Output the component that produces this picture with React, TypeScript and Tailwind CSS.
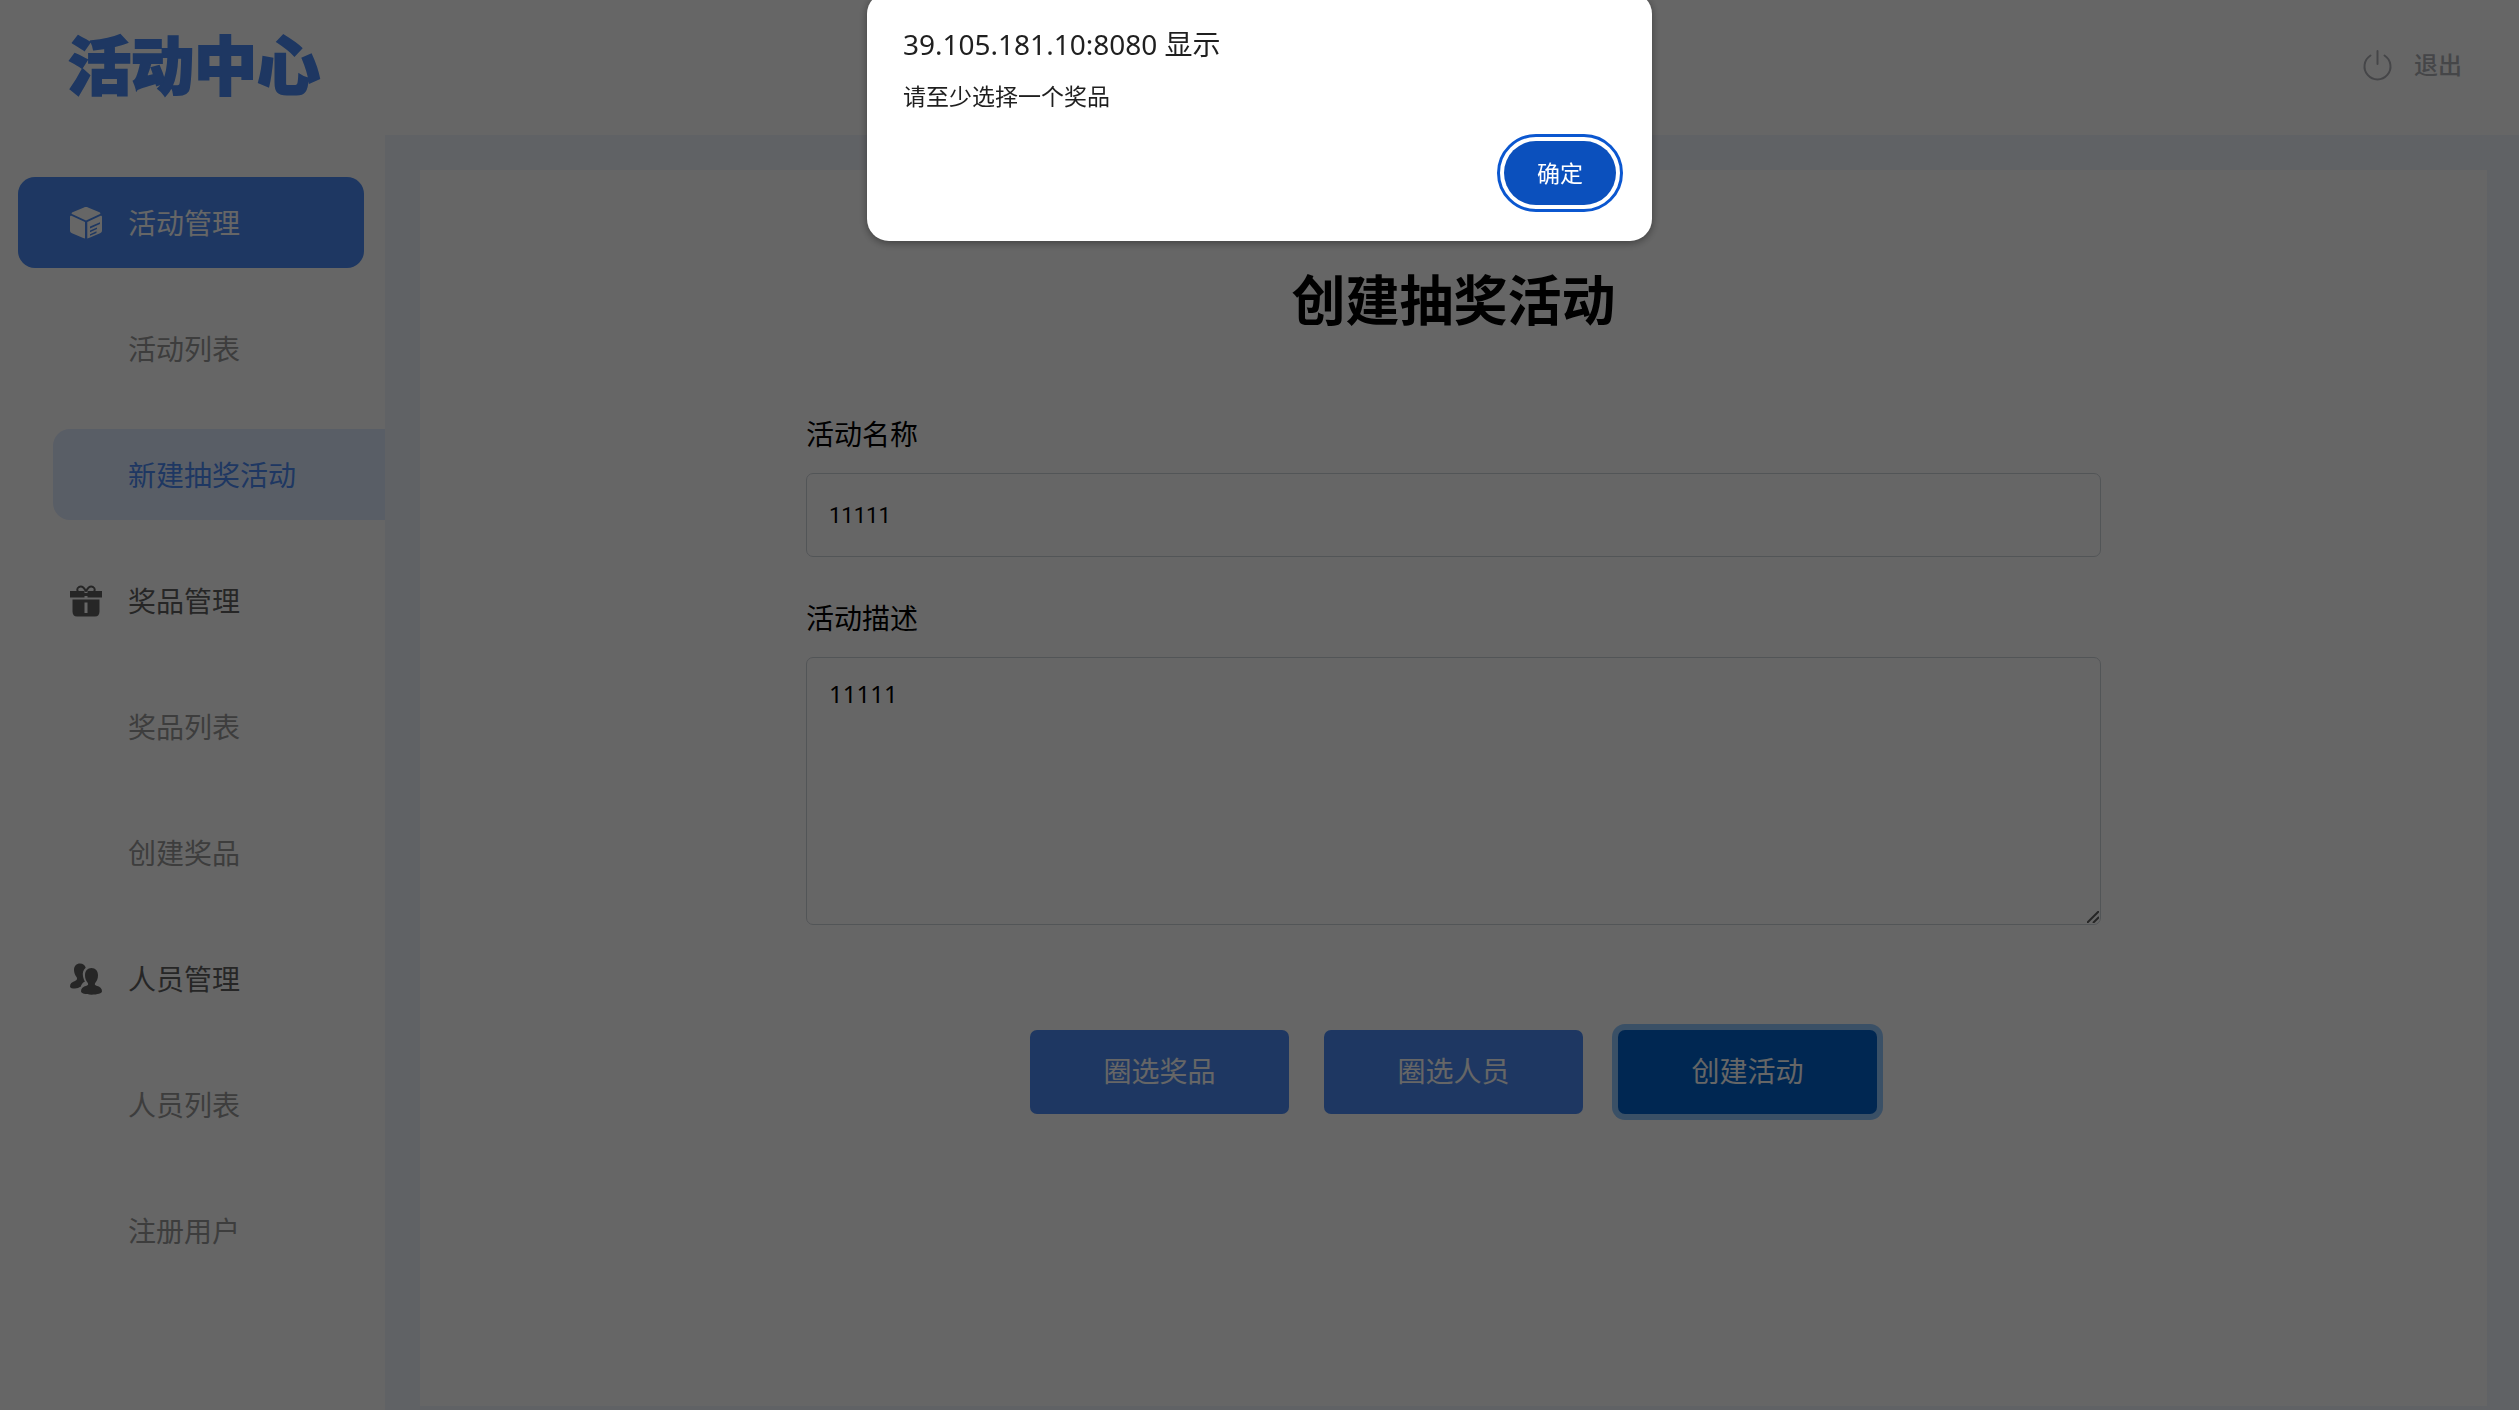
import type { ReactNode } from "react";

type NavEntry = { label: string; icon?: ReactNode; active?: boolean; selected?: boolean };

function BoxIcon() {
  return (
    <svg className="h-8 w-8" viewBox="0 0 32 32" fill="currentColor" aria-hidden="true">
      <path d="M16 0c.7 0 1.400.2 2 .4l11.500 4.800c1.200.5 1.200 1.600 0 2.100L16 13.600 2.500 7.300c-1.200-.5-1.200-1.600 0-2.100L14 .4c.6-.2 1.300-.4 2-.4Z" />
      <path d="M1.400 8.800 15 14.900V31.500c-.6-.1-1.200-.2-1.800-.4L2 26.200C.8 25.700 0 24.800 0 23.500V10c0-1 .6-1.500 1.400-1.200Z" />
      <path
        fillRule="evenodd"
        d="M30.600 8.800c.8-.3 1.400.2 1.400 1.200v13.500c0 1.300-.8 2.200-2 2.700l-11.200 4.900c-.5.200-1 .3-1.500.4V14.900L30.600 8.800ZM20 19.600v1.900l10-4.400v-1.900L20 19.600Zm0 3.900v1.700l7-3.100v-1.700L20 23.500Zm0 3.700v1.600l6.500-2.900v-1.600L20 27.200Z"
      />
    </svg>
  );
}

function GiftIcon() {
  return (
    <svg className="h-8 w-8" viewBox="0 0 32 32" aria-hidden="true">
      <g fill="none" stroke="currentColor" strokeWidth="2">
        <path d="M16 6.500C14 2.500 11.500.8 9 2c-2.500 1.500-2 4-.5 5" />
        <path d="M16 6.500C18 2.500 20.500.8 23 2c2.500 1.500 2 4 .5 5" />
      </g>
      <path fill="currentColor" d="M0 6h14.500v6.500H0zM17.500 6H32v6.500H17.500zM14.500 8h3v3h-3z" />
      <path
        fill="currentColor"
        fillRule="evenodd"
        d="M2.500 14.500h27v12c0 3-1.500 5-4.500 5H7c-3 0-4.500-2-4.500-5v-12ZM14.500 17.500V28h3V17.500h-3Z"
      />
    </svg>
  );
}

function UsersIcon() {
  return (
    <svg className="h-8 w-8" viewBox="0 0 32 32" fill="currentColor" aria-hidden="true">
      <path d="M10 .5c3 0 5.200 1.700 5.700 4.200-2.400 2-3.400 5-2.700 8.600.4 2.200 1.100 3.900 2 5.200-2 1-3.600 2.400-4.300 5.300-1.700.8-3.500 1.700-5.700 1.700-2.500 0-5-.5-5-1.800 0-3.400 1.800-4.700 5-5.800 1.900-.7 2.500-2 1.700-3.700C5.200 12.300 4 9.800 4 7c0-3.900 2.400-6.500 6-6.500Z" />
      <path d="M21.500 5c4 0 6.500 3 6.500 7.300 0 3-1 5.600-2.800 7.700-.8 1.400-.2 2.200 1.300 2.700 3.500 1 5.500 2.600 5.500 5.600 0 2-4.500 3.400-10.500 3.400S11 30.300 11 28.300c0-3 2-4.600 5.500-5.600 1.500-.5 2.100-1.300 1.300-2.700-1.800-2.100-2.800-4.700-2.800-7.700C15 8 17.500 5 21.500 5Z" />
    </svg>
  );
}

function PowerIcon() {
  return (
    <svg className="h-8 w-8" viewBox="0 0 32 32" fill="none" stroke="currentColor" strokeWidth="2" strokeLinecap="round" aria-hidden="true">
      <path d="M15.500 2v13" />
      <path d="M8.500 6.500a13 13 0 1 0 14 0" />
    </svg>
  );
}

const navEntries: NavEntry[] = [
  { label: "活动管理", icon: <BoxIcon />, active: true },
  { label: "活动列表" },
  { label: "新建抽奖活动", selected: true },
  { label: "奖品管理", icon: <GiftIcon /> },
  { label: "奖品列表" },
  { label: "创建奖品" },
  { label: "人员管理", icon: <UsersIcon /> },
  { label: "人员列表" },
  { label: "注册用户" },
];

function NavItem({ entry }: { entry: NavEntry }) {
  let look = "ml-[53px] pl-[17px] text-[#999999]";
  if (entry.active) look = "ml-[18px] mr-[21px] rounded-[17px] bg-[#4b8bf4] pl-[52px] text-white";
  else if (entry.selected) look = "ml-[53px] rounded-l-[17px] bg-[#dfeaff] pl-[17px] text-[#4b8bf4]";
  else if (entry.icon) look = "ml-[53px] pl-[17px] text-[#606060]";

  return (
    <li>
      <a href="#" className={`flex h-[91px] items-center gap-[26px] text-[28px] ${look}`}>
        <span className="h-8 w-8 shrink-0">{entry.icon}</span>
        {entry.label}
      </a>
    </li>
  );
}

function AlertDialog() {
  return (
    <div className="fixed inset-0 flex items-start justify-center bg-black/60">
      <div
        role="alertdialog"
        aria-labelledby="alert-title"
        aria-describedby="alert-text"
        className="-mt-2 flex w-[785px] flex-col rounded-[22px] bg-white px-9 pb-9 pt-8 text-[#1f1f1f] shadow-[0_2px_8px_rgba(0,0,0,0.4)]"
      >
        <h2 id="alert-title" className="text-[28px] leading-10">
          39.105.181.10:8080 显示
        </h2>
        <p id="alert-text" className="mt-3 text-[23px] leading-10">
          请至少选择一个奖品
        </p>
        <button
          type="button"
          className="mt-[25px] h-16 w-28 self-end rounded-full bg-[#0b50bd] text-[23px] text-white outline-[3px] outline-offset-4 outline-[#0b57d0]"
        >
          确定
        </button>
      </div>
    </div>
  );
}

export default function App() {
  return (
    <div className="flex min-h-screen flex-col bg-white font-['Noto_Sans','Noto_Sans_CJK_SC',sans-serif]">
      <header className="flex h-[135px] items-center justify-between pb-1.5 pl-[68px] pr-[57px]">
        <h1 className="text-[63px] font-black leading-none text-[#4b8bf4] [-webkit-text-stroke:2px_#4b8bf4]">活动中心</h1>
        <button type="button" className="flex items-center gap-5 text-2xl font-medium text-[#adaeb5]">
          <PowerIcon />
          退出
        </button>
      </header>

      <div className="flex grow">
        <nav className="w-[385px] shrink-0 pt-[42px]">
          <ul className="flex flex-col gap-[35px]">
            {navEntries.map((entry) => (
              <NavItem entry={entry} key={entry.label} />
            ))}
          </ul>
        </nav>

        <main className="flex grow flex-col bg-[#f1f4fd] pb-1 pl-[35px] pr-8 pt-[35px]">
          <section className="grow bg-white pt-[90px]">
            <h2 className="text-center text-[54px] font-bold leading-[80px] text-black">创建抽奖活动</h2>
            <form className="mx-auto mt-[74px] flex max-w-[1295px] flex-col text-black">
              <label htmlFor="activity-name" className="text-[28px] leading-10">
                活动名称
              </label>
              <input
                id="activity-name"
                defaultValue="11111"
                className="mt-[19px] h-[84px] rounded-[7px] border border-[#ced4da] px-[22px] font-[Roboto,sans-serif] text-[22px]"
              />
              <label htmlFor="activity-text" className="mt-[41px] text-[28px] leading-10">
                活动描述
              </label>
              <div className="relative mt-[19px]">
                <textarea
                  id="activity-text"
                  defaultValue="11111"
                  className="block h-[268px] w-full resize-none rounded-[7px] border border-[#ced4da] px-[22px] py-[18px] text-2xl leading-9"
                />
                <svg
                  className="pointer-events-none absolute bottom-0.5 right-0.5 h-3 w-3 text-[#606060]"
                  viewBox="0 0 12 12"
                  fill="none"
                  stroke="currentColor"
                  strokeWidth="2"
                  aria-hidden="true"
                >
                  <path d="M0 12 12 0M6 12l6-6" />
                </svg>
              </div>
              <div className="mt-[105px] flex justify-center gap-[35px] text-[28px] text-white">
                <button type="button" className="h-[84px] w-[259px] rounded-[7px] bg-[#4b8bf4] pb-0.5">
                  圈选奖品
                </button>
                <button type="button" className="h-[84px] w-[259px] rounded-[7px] bg-[#4b8bf4] pb-0.5">
                  圈选人员
                </button>
                <button type="submit" className="h-[84px] w-[259px] rounded-[7px] bg-[#0062cc] pb-0.5 ring-[6px] ring-[#92c7ff]">
                  创建活动
                </button>
              </div>
            </form>
          </section>
        </main>
      </div>
      <AlertDialog />
    </div>
  );
}
